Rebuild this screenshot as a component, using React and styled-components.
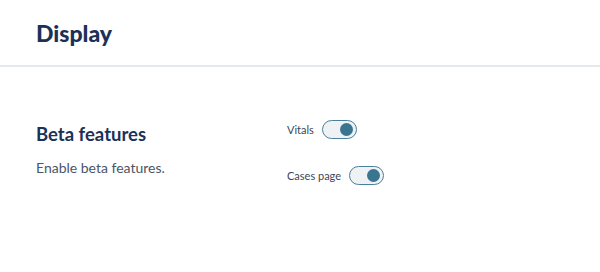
import React, { useState } from 'react';
import styled, { createGlobalStyle } from 'styled-components';

const GlobalStyle = createGlobalStyle`
  body {
    margin: 0;
    background: #ffffff;
    font-family: Lato, "Open Sans", sans-serif;
  }
`;

const Page = styled.div`
  width: 600px;
  height: 272px;
  overflow: hidden;
  background: #fff;
`;

const Header = styled.header`
  height: 67px;
  padding: 0 36px;
  display: flex;
  align-items: center;
  border-bottom: 2px solid #e3e9ee;
  box-sizing: border-box;
`;

const Title = styled.h1`
  margin: 0;
  font-size: 23px;
  font-weight: 900;
  color: #1c3157;
`;

const Section = styled.section`
  display: flex;
  padding: 55px 36px 0;
`;

const Info = styled.div`
  width: 251px;
`;

const SectionTitle = styled.h2`
  margin: 0 0 12px;
  font-size: 18.5px;
  line-height: 24px;
  font-weight: 700;
  color: #1c3157;
`;

const Description = styled.p`
  margin: 0;
  font-size: 14px;
  line-height: 20px;
  color: #4a5568;
`;

const Options = styled.div`
  display: flex;
  flex-direction: column;
  gap: 27px;
  margin-top: -2px;
`;

const OptionRow = styled.label`
  display: flex;
  align-items: center;
  gap: 8px;
  font-size: 11px;
  color: #3b4656;
  cursor: pointer;
`;

const Track = styled.button`
  position: relative;
  width: 35px;
  height: 19px;
  padding: 0;
  border-radius: 10px;
  border: 1.5px solid #4c7f98;
  background: #eef2f5;
  cursor: pointer;
`;

const Knob = styled.span`
  position: absolute;
  top: 2px;
  left: ${p => (p.on ? '17px' : '2px')};
  width: 13px;
  height: 13px;
  border-radius: 50%;
  background: ${p => (p.on ? '#3a7590' : '#a9b6c2')};
`;

const Toggle = ({ on, onClick }) => (
  <Track type="button" onClick={onClick} aria-pressed={on}>
    <Knob on={on ? 1 : 0} />
  </Track>
);

export default function App() {
  const [flags, setFlags] = useState({ vitals: true, cases: true });
  const flip = key => setFlags({ ...flags, [key]: !flags[key] });

  return (
    <Page>
      <GlobalStyle />
      <Header>
        <Title>Display</Title>
      </Header>
      <Section>
        <Info>
          <SectionTitle>Beta features</SectionTitle>
          <Description>Enable beta features.</Description>
        </Info>
        <Options>
          <OptionRow>
            Vitals
            <Toggle on={flags.vitals} onClick={() => flip('vitals')} />
          </OptionRow>
          <OptionRow>
            Cases page
            <Toggle on={flags.cases} onClick={() => flip('cases')} />
          </OptionRow>
        </Options>
      </Section>
    </Page>
  );
}
